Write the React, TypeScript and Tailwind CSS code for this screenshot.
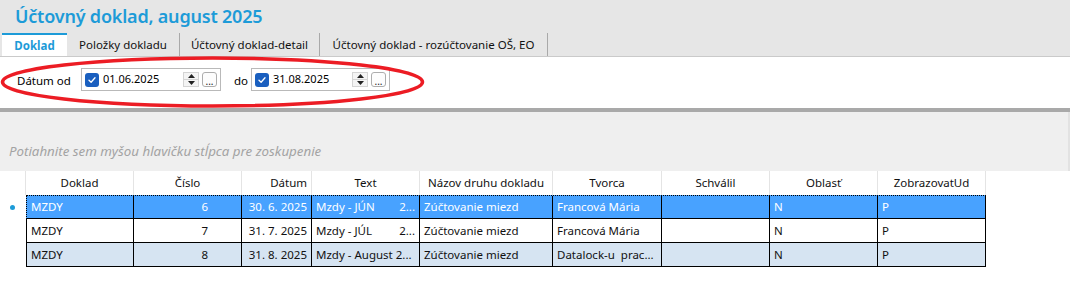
import { ReactNode } from 'react'

const font = 'font-["Segoe_UI","Noto_Sans",sans-serif]'

const tabs = [
  { label: 'Doklad', w: 'w-[65px]', active: true },
  { label: 'Položky dokladu', w: 'w-[113px]' },
  { label: 'Účtovný doklad-detail', w: 'w-[140px]' },
  { label: 'Účtovný doklad - rozúčtovanie OŠ, EO', w: 'w-[228px]' },
]

const columns = [
  { label: 'Doklad', w: 'w-[108px]', align: 'center' },
  { label: 'Číslo', w: 'w-[108px]', align: 'center' },
  { label: 'Dátum', w: 'w-[70px]', align: 'right' },
  { label: 'Text', w: 'w-[108px]', align: 'center' },
  { label: 'Názov druhu dokladu', w: 'w-[133px]', align: 'center' },
  { label: 'Tvorca', w: 'w-[109px]', align: 'center' },
  { label: 'Schválil', w: 'w-[108px]', align: 'center' },
  { label: 'Oblasť', w: 'w-[108px]', align: 'center' },
  { label: 'ZobrazovatUd', w: 'w-[108px]', align: 'center' },
]

const rows = [
  { cislo: '6', datum: '30. 6. 2025', text: ['Mzdy - JÚN', '2...'], tvorca: 'Francová Mária' },
  { cislo: '7', datum: '31. 7. 2025', text: ['Mzdy - JÚL', '2...'], tvorca: 'Francová Mária' },
  { cislo: '8', datum: '31. 8. 2025', text: ['Mzdy - August 2...'], tvorca: 'Datalock-u  prac...' },
]

function CheckBox() {
  return (
    <span className="flex size-[14px] shrink-0 items-center justify-center rounded-[3px] bg-[#1a5fbf]">
      <svg width="10" height="10" viewBox="0 0 10 10" fill="none">
        <path d="M2 5.2 4.1 7.2 8 2.8" stroke="#fff" strokeWidth="1.3" strokeLinecap="round" strokeLinejoin="round" />
      </svg>
    </span>
  )
}

function DateBox({ value, w }: { value: string; w: string }) {
  return (
    <div className={`flex h-[23px] ${w} items-center border border-[#b9b9b9] bg-white pl-[3px] pr-[3px]`}>
      <CheckBox />
      <span className="ml-[4px] text-[11px] text-black">{value}</span>
      <div className="ml-auto flex items-center gap-[3px]">
        <div className="flex h-[16px] w-[16px] flex-col">
          <span className="flex h-[8px] items-center justify-center border border-[#d4d4d4] bg-[#f4f4f4]">
            <svg width="7" height="4" viewBox="0 0 7 4">
              <path d="M0 4 3.5 0 7 4Z" fill="#222" />
            </svg>
          </span>
          <span className="-mt-px flex h-[8px] items-center justify-center border border-[#d4d4d4] bg-[#f4f4f4]">
            <svg width="7" height="4" viewBox="0 0 7 4">
              <path d="M0 0 3.5 4 7 0Z" fill="#222" />
            </svg>
          </span>
        </div>
        <span className="flex h-[15px] w-[15px] items-end justify-center rounded-[3px] border border-[#adadad] bg-[#fdfdfd] pb-[1px] text-[10px] leading-[8px] text-[#222]">
          ...
        </span>
      </div>
    </div>
  )
}

function Cell({ w, children, className = '' }: { w: string; children?: ReactNode; className?: string }) {
  return (
    <div className={`flex ${w} shrink-0 items-center overflow-hidden whitespace-pre border-r border-b border-black px-[4px] ${className}`}>
      {children}
    </div>
  )
}

export default function App() {
  return (
    <div className={`relative h-[284px] w-[1070px] overflow-hidden bg-white ${font}`}>
      <header className="h-[57px] border-b border-[#cacaca] bg-[#e6e6e6]">
        <h1 className="h-[33px] pl-[15px] pt-[4px] text-[18px] font-semibold leading-[25px] tracking-[-0.2px] text-[#1d9bd8]">
          Účtovný doklad, august 2025
        </h1>
        <nav className="flex h-[23px] pl-[2px] text-[11.5px]">
          {tabs.map((t) =>
            t.active ? (
              <div
                key={t.label}
                className={`${t.w} flex items-center justify-center border-t-2 border-[#1d9bd8] bg-white font-bold text-[#1d9bd8]`}
              >
                {t.label}
              </div>
            ) : (
              <div
                key={t.label}
                className={`${t.w} flex items-center justify-center border-r border-[#a9a9a9] text-[#111]`}
              >
                {t.label}
              </div>
            ),
          )}
        </nav>
      </header>

      <div className="flex h-[51px] items-start pl-[17px] pt-[11px] text-[11.5px] text-black">
        <span className="mt-[4px] w-[64px]">Dátum od</span>
        <DateBox value="01.06.2025" w="w-[140px]" />
        <span className="ml-[13px] mt-[4px] w-[17px]">do</span>
        <DateBox value="31.08.2025" w="w-[139px]" />
      </div>

      <div className="h-[4px] bg-[#a9a9a9]" />

      <div className="flex h-[59px] items-end border-r-2 border-[#e2e2e2] bg-[#efefef] pb-[9px] pl-[9px]">
        <span className="text-[13.3px] italic text-[#a3a3a3]">
          Potiahnite sem myšou hlavičku stĺpca pre zoskupenie
        </span>
      </div>

      <div className="text-[11.5px]">
        <div className="flex h-[24px]">
          <div className="w-[26px] shrink-0 border-r border-[#e4e4e4]" />
          {columns.map((c) => (
            <div
              key={c.label}
              className={`flex ${c.w} shrink-0 items-center border-r border-[#e4e4e4] px-[4px] text-[#111] ${
                c.align === 'right' ? 'justify-end' : 'justify-center'
              }`}
            >
              {c.label}
            </div>
          ))}
        </div>

        {rows.map((r, i) => {
          const bg = i === 0 ? 'bg-[#48a2ff] text-white' : i === 2 ? 'bg-[#d6e4f2] text-[#111]' : 'bg-white text-[#111]'
          return (
            <div key={r.cislo} className="flex h-[24px]">
              <div className="flex w-[26px] shrink-0 items-center justify-center">
                {i === 0 && <span className="ml-[-2px] size-[5px] rounded-full bg-[#1d9bd8]" />}
              </div>
              <div className={`flex ${bg} border-l border-black ${i === 0 ? 'border-t border-dotted' : ''}`}>
                <Cell w="w-[107px]">MZDY</Cell>
                <Cell w="w-[108px]" className="justify-end pr-[33px]">
                  {r.cislo}
                </Cell>
                <Cell w="w-[70px]" className="justify-end px-[2px]">
                  {r.datum}
                </Cell>
                <Cell w="w-[108px]" className="justify-between px-[3px]">
                  {r.text.map((t) => (
                    <span key={t}>{t}</span>
                  ))}
                </Cell>
                <Cell w="w-[133px]" className="px-[3px]">
                  Zúčtovanie miezd
                </Cell>
                <Cell w="w-[109px]" className="px-[3px]">
                  {r.tvorca}
                </Cell>
                <Cell w="w-[108px]" />
                <Cell w="w-[108px]" className="px-[3px]">
                  N
                </Cell>
                <Cell w="w-[108px]" className="px-[3px]">
                  P
                </Cell>
              </div>
            </div>
          )
        })}
      </div>

      <svg className="pointer-events-none absolute left-0 top-0" width="1070" height="284">
        <ellipse cx="212.5" cy="82" rx="210" ry="24" fill="none" stroke="#ec1c24" strokeWidth="3.5" />
      </svg>
    </div>
  )
}
